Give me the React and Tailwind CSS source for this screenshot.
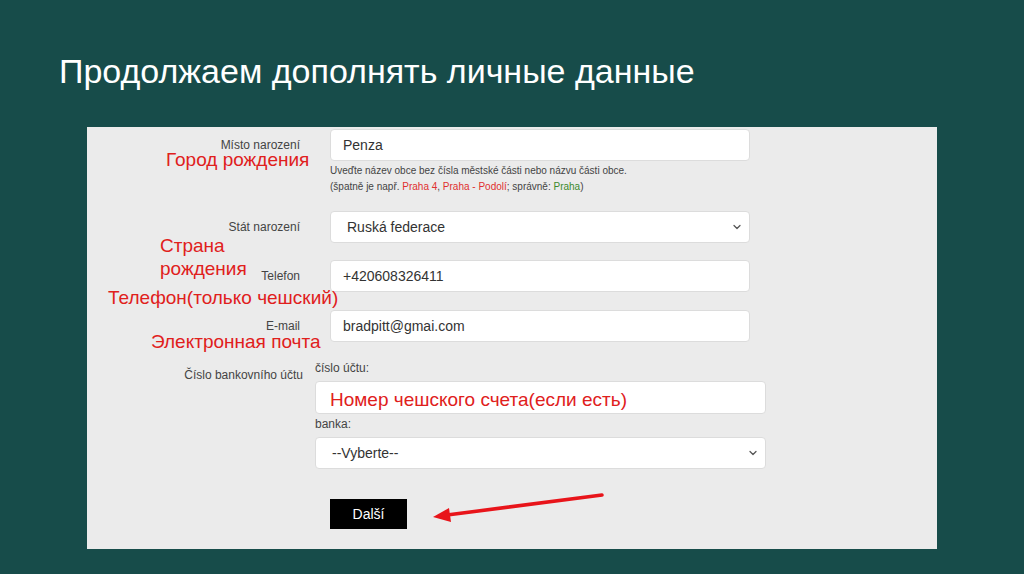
import { ChevronDown } from 'lucide-react'

const font = { fontFamily: '"Liberation Sans", Arial, sans-serif' }

function Field({ label, children, labelPad = 'pt-[7px]' }) {
  return (
    <div className="flex items-start">
      <div className={`w-[213px] text-right text-[12px] text-[#444] ${labelPad}`}>{label}</div>
      <div className="ml-[30px] w-[420px]">{children}</div>
    </div>
  )
}

function TextBox({ value, className = '' }) {
  return (
    <div className={`h-[32px] bg-white border border-[#dcdcdc] rounded-[4px] flex items-center px-[12px] text-[14px] text-[#333] ${className}`}>
      {value}
    </div>
  )
}

function SelectBox({ value, className = '' }) {
  return (
    <div className={`h-[32px] bg-white border border-[#dcdcdc] rounded-[4px] flex items-center justify-between pl-[16px] pr-[6px] text-[14px] text-[#333] ${className}`}>
      <span>{value}</span>
      <ChevronDown size={12} strokeWidth={2.5} className="text-[#555]" />
    </div>
  )
}

export default function App() {
  return (
    <div className="w-[1024px] h-[574px] bg-[#174c4a] overflow-hidden" style={font}>
      {/* Slide title */}
      <h1 className="pl-[59px] pt-[51px] text-[34px] leading-[40px] text-white">
        Продолжаем дополнять личные данные
      </h1>

      {/* Form screenshot */}
      <div className="relative ml-[87px] mt-[36px] w-[850px] h-[422px] bg-[#ebebeb] pt-[2px]">
        <Field label="Místo narození">
          <TextBox value="Penza" />
          <div className="mt-[2px] text-[10px] leading-[16px] text-[#444]">
            <div>Uveďte název obce bez čísla městské části nebo názvu části obce.</div>
            <div>
              (špatně je např. <span className="text-[#e03030]">Praha 4</span>,{' '}
              <span className="text-[#e03030]">Praha - Podolí</span>; správně:{' '}
              <span className="text-[#3c8a2e]">Praha</span>)
            </div>
          </div>
        </Field>

        <div className="mt-[16px]">
          <Field label="Stát narození">
            <SelectBox value="Ruská federace" />
          </Field>
        </div>

        <div className="mt-[17px]">
          <Field label="Telefon">
            <TextBox value="+420608326411" />
          </Field>
        </div>

        <div className="mt-[18px]">
          <Field label="E-mail">
            <TextBox value="bradpitt@gmai.com" />
          </Field>
        </div>

        <div className="mt-[17px] flex items-start">
          <div className="w-[216px] text-right text-[12px] text-[#444] pt-[7px]">Číslo bankovního účtu</div>
          <div className="ml-[12px] w-[451px]">
            <div className="text-[12px] leading-[18px] text-[#444]">číslo účtu:</div>
            <TextBox value="" className="mt-[4px] h-[33px]" />
            <div className="mt-[1px] text-[12px] leading-[18px] text-[#444]">banka:</div>
            <SelectBox value="--Vyberte--" className="mt-[4px]" />
            <button className="mt-[30px] ml-[15px] w-[77px] h-[30px] bg-black text-white text-[14px]">Další</button>
          </div>
        </div>

        {/* Red annotations */}
        <div className="absolute left-[79px] top-[21px] text-[19px] leading-[24px] text-[#e0201c]">Город рождения</div>
        <div className="absolute left-[73px] top-[107px] text-[19px] leading-[23px] text-[#e0201c]">
          Страна<br />рождения
        </div>
        <div className="absolute left-[21px] top-[159px] text-[19px] leading-[24px] text-[#e0201c]">Телефон(только чешский)</div>
        <div className="absolute left-[64px] top-[203px] text-[19px] leading-[24px] text-[#e0201c]">Электронная почта</div>
        <div className="absolute left-[243px] top-[261px] text-[19px] leading-[24px] text-[#e0201c]">Номер чешского счета(если есть)</div>

        <svg className="absolute left-[340px] top-[362px]" width="185" height="35" viewBox="0 0 185 35">
          <line x1="175" y1="6" x2="20" y2="26" stroke="#e8141a" strokeWidth="3.5" strokeLinecap="round" />
          <polygon points="6,28 22,19 24,33" fill="#e8141a" />
        </svg>
      </div>
    </div>
  )
}
